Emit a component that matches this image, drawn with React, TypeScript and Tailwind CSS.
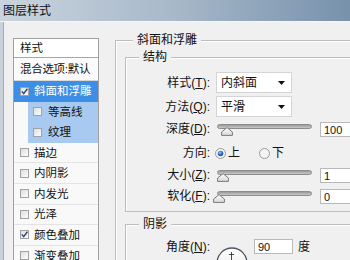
import React from "react";

const Check = ({ checked = false }: { checked?: boolean }) => (
  <span className="flex h-[9px] w-[9px] shrink-0 items-center justify-center border border-[#a2a2a2] bg-gradient-to-br from-[#dedede] to-[#fdfdfd]">
    {checked && (
      <svg width="7" height="7" viewBox="0 0 7 7">
        <path d="M0.8 3.4 L2.7 5.6 L6.4 0.8" fill="none" stroke="#2d4273" strokeWidth="1.4" />
      </svg>
    )}
  </span>
);

const ListRow = ({ label, checked = false }: { label: string; checked?: boolean }) => (
  <div className="flex h-[20.6px] shrink-0 items-center gap-[5px] border-b border-[#e4e4e4] bg-[#f9f9f9] pl-[6px]">
    <Check checked={checked} />
    <span>{label}</span>
  </div>
);

const SubRow = ({ label }: { label: string }) => (
  <div className="h-[20.6px] shrink-0 pl-[14px]">
    <div className="flex h-full items-center gap-[6px] bg-[#a9caf0] pl-[5px]">
      <Check />
      <span>{label}</span>
    </div>
  </div>
);

const Label = ({ text, u }: { text: string; u?: string }) => (
  <span className="w-[84px] shrink-0 text-right">
    {text}
    {u && (
      <>
        (<span className="underline underline-offset-1">{u}</span>)
      </>
    )}
    :
  </span>
);

const Dropdown = ({ value }: { value: string }) => (
  <div className="ml-[6px] flex h-[21px] w-[76px] items-center justify-between border border-[#d4d4d4] bg-white pl-[4px] pr-[6px]">
    <span>{value}</span>
    <svg width="7" height="4" viewBox="0 0 7 4">
      <path d="M0 0 H7 L3.5 4 Z" fill="#111" />
    </svg>
  </div>
);

const Slider = ({ thumb }: { thumb: string }) => (
  <div className="ml-[7px] flex h-[16px] w-[95px] shrink-0 flex-col">
    <div className="mt-[3px] h-[5px] w-full rounded-full border border-[#8c8c8c] bg-gradient-to-b from-[#9a9a9a] to-[#c9c9c9]" />
    <svg className={`-mt-[2px] ${thumb}`} width="12" height="9" viewBox="0 0 12 9">
      <defs>
        <linearGradient id="tg" x1="0" y1="0" x2="0" y2="1">
          <stop offset="0" stopColor="#ffffff" />
          <stop offset="1" stopColor="#d6d6d6" />
        </linearGradient>
      </defs>
      <path d="M6 0.6 L11.4 5 L11.4 8.4 L0.6 8.4 L0.6 5 Z" fill="url(#tg)" stroke="#7a7a7a" strokeWidth="1" />
    </svg>
  </div>
);

const Input = ({ value, w = "w-[40px]", ml = "ml-[8px]" }: { value: string; w?: string; ml?: string }) => (
  <div className={`${ml} ${w} flex h-[15px] shrink-0 items-center border border-[#b9b9b9] bg-white pl-[3px] font-['Liberation_Sans',sans-serif] text-[11px]`}>
    {value}
  </div>
);

const Radio = ({ on = false }: { on?: boolean }) => (
  <svg width="11" height="11" viewBox="0 0 11 11" className="shrink-0">
    <defs>
      <radialGradient id="rg" cx="0.4" cy="0.35" r="0.7">
        <stop offset="0" stopColor="#9fd0ff" />
        <stop offset="0.5" stopColor="#2f76c8" />
        <stop offset="1" stopColor="#164d8f" />
      </radialGradient>
    </defs>
    <circle cx="5.5" cy="5.5" r="5" fill="#f4f4f4" stroke="#9a9a9a" strokeWidth="1" />
    {on && <circle cx="5.5" cy="5.5" r="2.8" fill="url(#rg)" />}
  </svg>
);

export default function App() {
  return (
    <div className="h-[260px] w-[350px] overflow-hidden whitespace-nowrap bg-[#f0f0f0] font-['Liberation_Sans','Noto_Sans_CJK_SC',sans-serif] text-[12px] leading-[14px] text-[#111]">
      <div className="flex h-[21px] items-center bg-gradient-to-r from-[#cad4de] via-[#a7b8c9] to-[#7892ac] pl-[3px] text-[12px]">
        图层样式
      </div>
      <div className="h-px bg-[#f4f6f8]" />
      <div className="flex h-[240px]">
        <div className="w-[3px] shrink-0 bg-[#c9d2db]" />
        <div className="w-px shrink-0 bg-[#a3adb8]" />
        <div className="ml-[9px] mt-[16px] flex w-[86px] shrink-0 flex-col overflow-hidden border border-[#a0a0a0] bg-[#f9f9f9] text-[11.5px]">
          <div className="flex h-[19px] shrink-0 items-center border-b border-[#a8a8a8] bg-white pl-[6px]">样式</div>
          <div className="flex h-[23px] shrink-0 items-center border-b border-[#d8d8d8] bg-[#fbfbfb] pl-[6px] tracking-[-0.3px]">混合选项:默认</div>
          <div className="flex h-[20.6px] shrink-0 items-center gap-[5px] bg-[#3d8ee6] pl-[6px] text-white">
            <Check checked />
            <span>斜面和浮雕</span>
          </div>
          <SubRow label="等高线" />
          <SubRow label="纹理" />
          <ListRow label="描边" />
          <ListRow label="内阴影" />
          <ListRow label="内发光" />
          <ListRow label="光泽" />
          <ListRow label="颜色叠加" checked />
          <ListRow label="渐变叠加" />
        </div>
        <div className="ml-[16px] mt-[11px] shrink-0">
          <fieldset className="w-[260px] border border-[#bdbdbd] pb-[20px] shadow-[inset_1px_1px_0_#ffffff]">
            <legend className="ml-[17px] bg-[#f0f0f0] px-[4px] leading-[14px]">斜面和浮雕</legend>
            <fieldset className="ml-[9px] mt-[3px] w-[250px] border border-[#bdbdbd] pb-[7px] shadow-[inset_1px_1px_0_#ffffff]">
              <legend className="ml-[13px] bg-[#f0f0f0] px-[4px] leading-[14px]">结构</legend>
              <div className="mt-[8px] flex h-[21px] items-center">
                <Label text="样式" u="T" />
                <Dropdown value="内斜面" />
              </div>
              <div className="mt-[3px] flex h-[21px] items-center">
                <Label text="方法" u="Q" />
                <Dropdown value="平滑" />
              </div>
              <div className="mt-[4px] flex h-[16px] items-start">
                <span className="mt-[1px] flex"><Label text="深度" u="D" /></span>
                <Slider thumb="ml-[4px]" />
                <div className="mt-[1px]"><Input value="100" /></div>
              </div>
              <div className="mt-[8px] flex h-[16px] items-center">
                <Label text="方向" />
                <span className="ml-[5px] flex items-center">
                  <Radio on />
                  <span className="ml-[2px]">上</span>
                  <span className="ml-[19px] flex"><Radio /></span>
                  <span className="ml-[2px]">下</span>
                </span>
              </div>
              <div className="mt-[6px] flex h-[16px] items-start">
                <span className="mt-[1px] flex"><Label text="大小" u="Z" /></span>
                <Slider thumb="ml-[0px]" />
                <div className="mt-[1px]"><Input value="1" /></div>
              </div>
              <div className="mt-[5px] flex h-[16px] items-start">
                <span className="mt-[1px] flex"><Label text="软化" u="F" /></span>
                <Slider thumb="-ml-[4px]" />
                <div className="mt-[1px]"><Input value="0" /></div>
              </div>
            </fieldset>
            <fieldset className="ml-[9px] mt-[5px] w-[250px] border border-[#bdbdbd] pb-[30px] shadow-[inset_1px_1px_0_#ffffff]">
              <legend className="ml-[13px] bg-[#f0f0f0] px-[4px] leading-[14px]">阴影</legend>
              <div className="mt-[8px] flex items-start">
                <span className="flex h-[15px] items-center"><Label text="角度" u="N" /></span>
                <svg className="ml-[6px] mt-[8px] shrink-0" width="32" height="32" viewBox="0 0 32 32">
                  <defs>
                    <linearGradient id="dg" x1="0" y1="0" x2="0" y2="1">
                      <stop offset="0" stopColor="#ffffff" />
                      <stop offset="1" stopColor="#e6e6e6" />
                    </linearGradient>
                  </defs>
                  <circle cx="16" cy="16" r="15" fill="url(#dg)" stroke="#4d5563" strokeWidth="1.3" />
                  <path d="M15.5 5 V10 M13 7.5 H18" stroke="#333" strokeWidth="0.9" />
                  <path d="M15.5 10 V16" stroke="#333" strokeWidth="0.9" />
                </svg>
                <Input value="90" w="w-[39px]" ml="ml-[6px]" />
                <span className="ml-[5px] flex h-[15px] items-center">度</span>
              </div>
            </fieldset>
          </fieldset>
        </div>
      </div>
    </div>
  );
}
